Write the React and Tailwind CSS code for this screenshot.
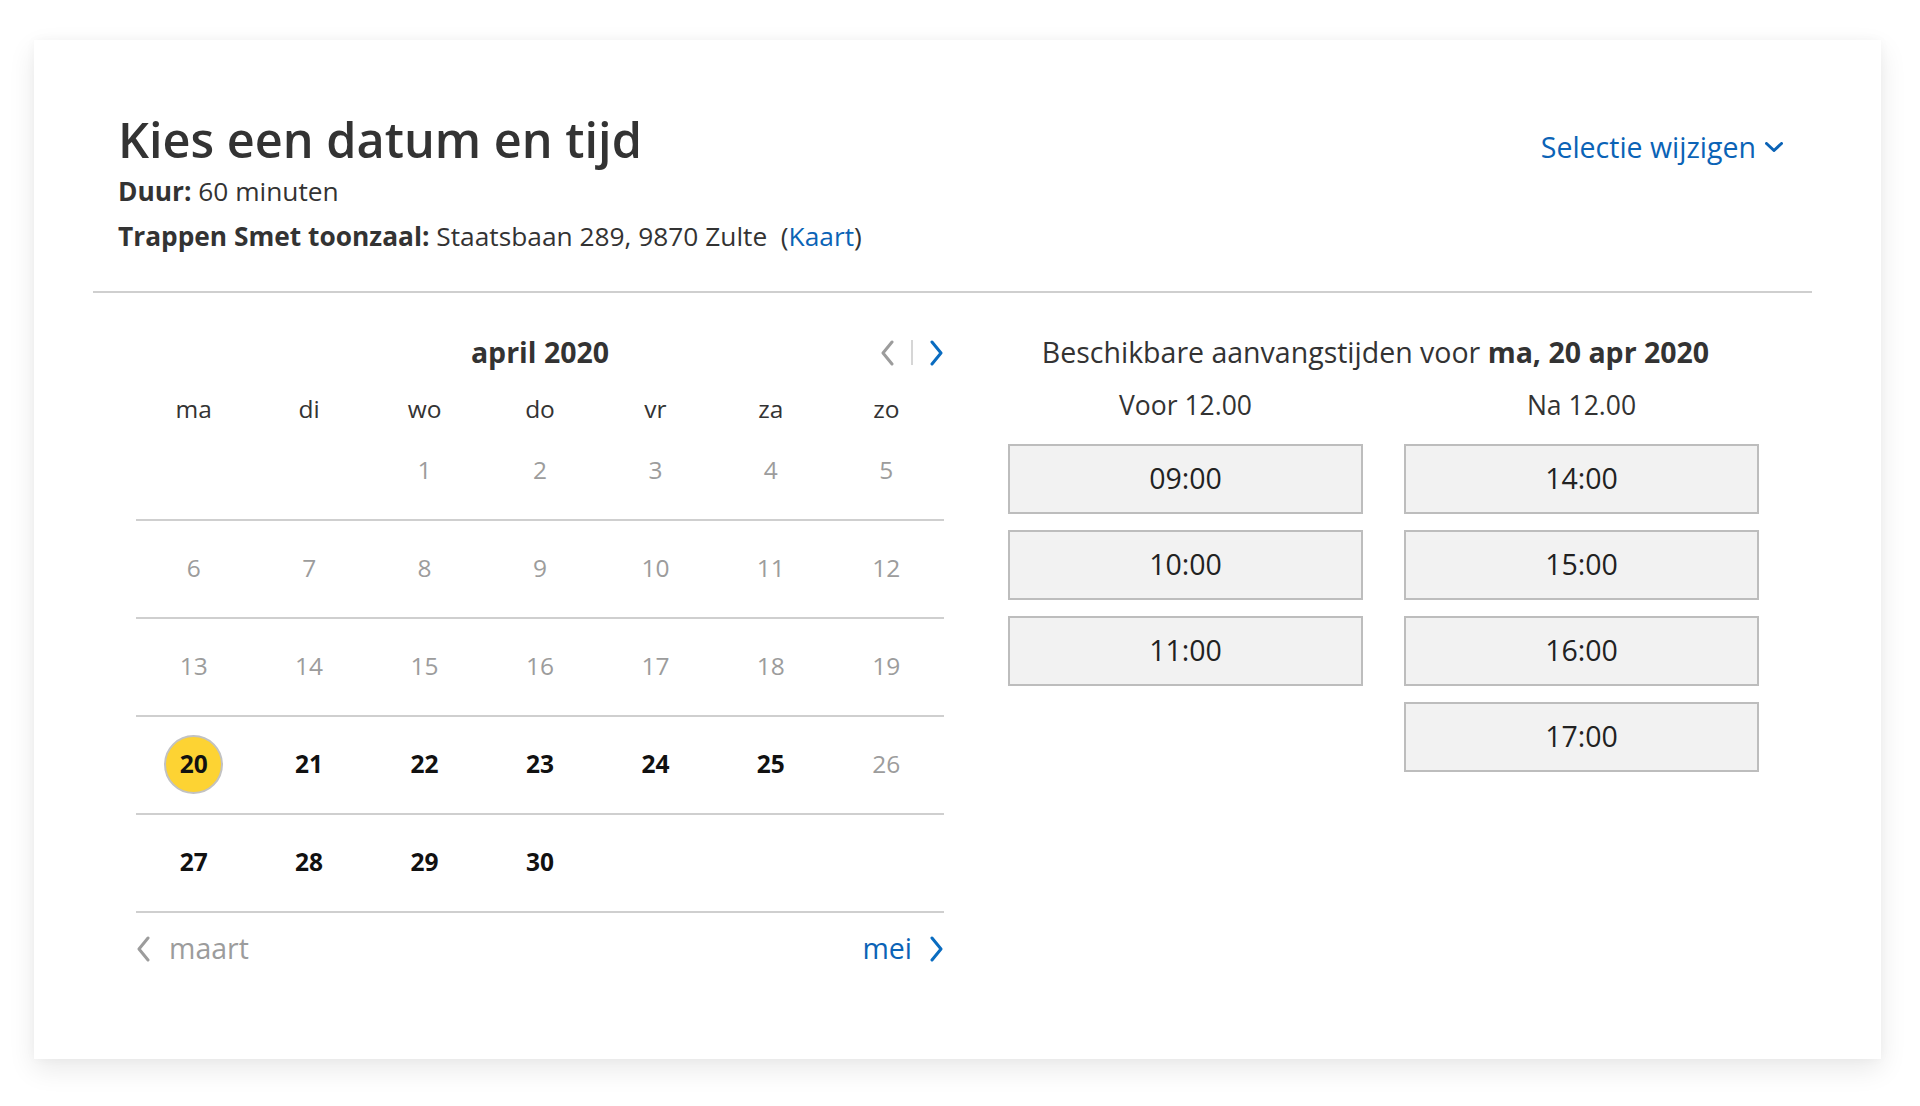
import React from 'react';

const weekdays = ['ma', 'di', 'wo', 'do', 'vr', 'za', 'zo'];

// april 2020: starts on a wednesday. 0 = empty cell
const weeks = [
  [0, 0, 1, 2, 3, 4, 5],
  [6, 7, 8, 9, 10, 11, 12],
  [13, 14, 15, 16, 17, 18, 19],
  [20, 21, 22, 23, 24, 25, 26],
  [27, 28, 29, 30, 0, 0, 0],
];

const available = [21, 22, 23, 24, 25, 27, 28, 29, 30];
const selected = 20;

const morning = ['09:00', '10:00', '11:00'];
const afternoon = ['14:00', '15:00', '16:00', '17:00'];

function ChevronLeft({ className }) {
  return (
    <svg width="14" height="26" viewBox="0 0 14 26" fill="none" className={className}>
      <path d="M12 2 L3 13 L12 24" stroke="currentColor" strokeWidth="3" strokeLinecap="round" strokeLinejoin="round" />
    </svg>
  );
}

function ChevronRight({ className }) {
  return (
    <svg width="14" height="26" viewBox="0 0 14 26" fill="none" className={className}>
      <path d="M2 2 L11 13 L2 24" stroke="currentColor" strokeWidth="3" strokeLinecap="round" strokeLinejoin="round" />
    </svg>
  );
}

function ChevronDown() {
  return (
    <svg width="18" height="10" viewBox="0 0 18 10" fill="none" className="text-[#0b63b6]">
      <path d="M1.5 1.5 L9 8.5 L16.5 1.5" stroke="currentColor" strokeWidth="3" strokeLinecap="round" strokeLinejoin="round" />
    </svg>
  );
}

function DayCell({ day }) {
  if (!day) return <div />;
  if (day === selected) {
    return (
      <div className="flex items-center justify-center">
        <span className="flex items-center justify-center w-[59px] h-[59px] rounded-full bg-[#fdd333] border-2 border-[#c2c2c2] font-bold text-[#111]">
          {day}
        </span>
      </div>
    );
  }
  const isAvailable = available.includes(day);
  return (
    <div className={`flex items-center justify-center ${isAvailable ? 'font-bold text-[#111]' : 'text-[#9c9c9c]'}`}>
      {day}
    </div>
  );
}

function TimeButton({ time }) {
  return (
    <button className="h-[70px] w-full bg-[#f2f2f2] border-2 border-[#bdbdbd] text-[28.5px] text-[#222]">
      {time}
    </button>
  );
}

export default function App() {
  return (
    <div className="min-h-screen bg-white pt-[40px] pl-[34px]" style={{ fontFamily: '"Open Sans", sans-serif' }}>
      <div className="w-[1847px] h-[1019px] bg-white pl-[59px] pr-[69px] pt-[70px] shadow-[0_10px_26px_rgba(0,0,0,0.09),0_0_10px_rgba(0,0,0,0.03)]">
        {/* header */}
        <div className="flex items-baseline justify-between pl-[25px] pr-[29px]">
          <h1 className="text-[48.6px] leading-[58px] font-semibold text-[#333]">Kies een datum en tijd</h1>
          <a className="flex items-center gap-[9px] text-[28.5px] text-[#0b63b6]">
            Selectie wijzigen
            <ChevronDown />
          </a>
        </div>
        <div className="pl-[25px] text-[26.3px] leading-[45px] text-[#333]">
          <p><span className="font-bold">Duur:</span> 60 minuten</p>
          <p>
            <span className="font-bold">Trappen Smet toonzaal:</span> Staatsbaan 289, 9870 Zulte&nbsp; (<a className="text-[#0b63b6]">Kaart</a>)
          </p>
        </div>
        <div className="mt-[32px] h-[2px] bg-[#cfcfcf]" />

        <div className="flex">
          {/* calendar */}
          <div className="ml-[43px] w-[808px]">
            <div className="mt-[32px] h-[56px] grid grid-cols-[1fr_auto_1fr] items-center">
              <div />
              <div className="text-[28.5px] font-bold text-[#333]">april 2020</div>
              <div className="flex items-center justify-end">
                <ChevronLeft className="text-[#9c9c9c]" />
                <span className="mx-[17px] w-[2px] h-[25px] bg-[#d6d6d6]" />
                <ChevronRight className="text-[#0a6cc0]" />
              </div>
            </div>
            <div className="grid grid-cols-7 h-[42px] pt-[14px] text-[24.5px] leading-[28px] text-[#333]">
              {weekdays.map(w => (
                <div key={w} className="text-center">{w}</div>
              ))}
            </div>
            <div className="text-[24.5px]">
              {weeks.map((week, i) => (
                <div key={i} className="grid grid-cols-7 h-[98px] border-b-2 border-[#cfcfcf]">
                  {week.map((d, j) => (
                    <DayCell key={j} day={d} />
                  ))}
                </div>
              ))}
            </div>
            <div className="h-[72px] flex items-center justify-between text-[28.5px]">
              <a className="flex items-center gap-[19px] text-[#9c9c9c]">
                <ChevronLeft />
                maart
              </a>
              <a className="flex items-center gap-[18px] text-[#0b63b6]">
                mei
                <ChevronRight className="text-[#0a6cc0]" />
              </a>
            </div>
          </div>

          {/* time slots */}
          <div className="ml-[64px] w-[751px]">
            <div className="mt-[32px] h-[56px] flex items-center justify-center pr-[16px] text-[28.5px] text-[#333]">
              <span>Beschikbare aanvangstijden voor <span className="font-bold">ma, 20 apr 2020</span></span>
            </div>
            <div className="grid grid-cols-2 gap-x-[41px]">
              <div>
                <div className="h-[50px] flex items-center justify-center text-[26.5px] text-[#333]">Voor 12.00</div>
                <div className="mt-[13px] flex flex-col gap-[16px]">
                  {morning.map(t => <TimeButton key={t} time={t} />)}
                </div>
              </div>
              <div>
                <div className="h-[50px] flex items-center justify-center text-[26.5px] text-[#333]">Na 12.00</div>
                <div className="mt-[13px] flex flex-col gap-[16px]">
                  {afternoon.map(t => <TimeButton key={t} time={t} />)}
                </div>
              </div>
            </div>
          </div>
        </div>
      </div>
    </div>
  );
}
